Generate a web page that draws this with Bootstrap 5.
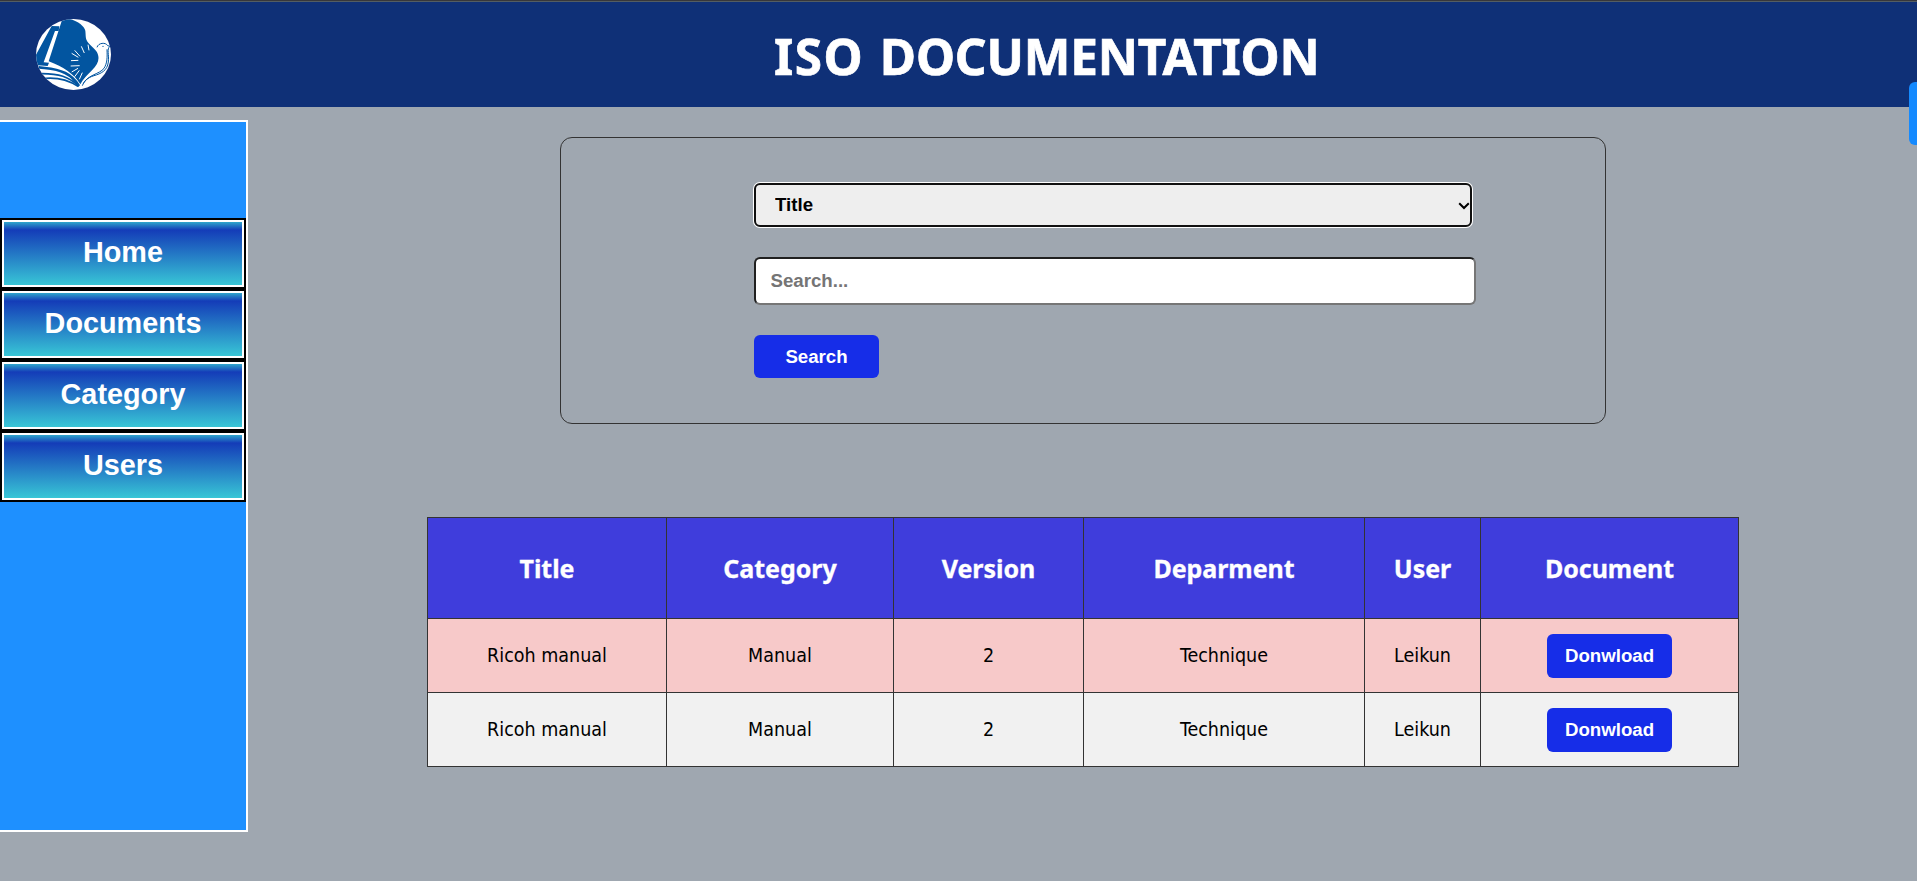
<!DOCTYPE html>
<html lang="en">
<head>
<meta charset="utf-8">
<meta name="viewport" content="width=device-width, initial-scale=1">
<title>ISO Documentation</title>
<link href="https://cdn.jsdelivr.net/npm/bootstrap@5.3.0/dist/css/bootstrap.min.css" rel="stylesheet">
<style>
  body { background: #9fa7b0; font-family: "Noto Sans", sans-serif; color: #000; min-height: 881px; overflow: hidden; }
  .top-bar { height: 107px; background: #0f3077; border-top: 1px solid #37373b; box-shadow: inset 0 1px #535d63; padding-left: 36px; }
  .brand-logo { width: 75px; height: 71px; }
  .page-title { font-size: 49.5px; font-weight: 700; line-height: 1; letter-spacing: -.2px; word-spacing: 3px; -webkit-text-stroke: .7px #fff; color: #fff; width: 541px; margin-left: 663px; padding-top: 5px; white-space: nowrap; }
  .title-lead { letter-spacing: 1.5px; }
  .side-menu { width: 248px; height: 712px; margin-top: 13px; padding-top: 96px; background: #1e90ff; border: 2px solid #fff; border-left: 0; }
  .side-menu .nav-link { height: 71px; padding: 0 0 2px; border: 2px solid #000; color: #fff; font: 700 28.8px "Liberation Sans", sans-serif; box-shadow: inset 0 0 0 2px #fff; background: linear-gradient(#2fa6cc 2px, #143cb8 10px, #38c6d6 65px); }
  .main-area { padding: 30px 179px 0 179px; }
  .search-box { width: 1046px; height: 287px; border: 1px solid #333; border-radius: 12px; padding: 45px 129px 0 193px; }
  .search-box .form-select, .search-box .form-control, .btn-doc { font: 700 18.667px "Liberation Sans", sans-serif; border-radius: 6px; }
  .search-box .form-select { width: 718px; height: 44px; padding: 0 18px 1px 19px; color: #000; border: 2px solid #101010; box-shadow: 0 0 0 1px #fff;
    background: #eee url("data:image/svg+xml,%3Csvg xmlns='http://www.w3.org/2000/svg' viewBox='0 0 12 8'%3E%3Cpath d='M1.2 1.2 6 6l4.8-4.8' fill='none' stroke='%23000' stroke-width='2'/%3E%3C/svg%3E") no-repeat right 0 top 17px / 12px 8px; }
  .search-box .form-control { width: 722px; height: 48px; margin-top: 30px; padding: 0 14.5px; border: 2px solid; border-color: #202020 #767676 #767676 #202020; }
  .search-box .form-control::placeholder { color: #757575; opacity: 1; }
  .btn-doc, .btn-doc:hover { width: 125px; height: 44px; padding: 0; border: 0; background: #162de8; color: #fff; }
  .btn-search { height: 43px; margin-top: 30px; }
  .doc-table { width: 1312px; margin: 93px 0 0; table-layout: fixed; border-collapse: collapse; text-align: center; color: #000; }
  .doc-table th, .doc-table td { border: 1px solid #333; padding: 0; vertical-align: middle; line-height: 28px; white-space: nowrap; }
  .doc-table th { height: 101px; background: #3f3ddc; color: #fff; font-size: 25px; letter-spacing: -.05px; -webkit-text-stroke: .3px #fff; }
  .doc-table td { height: 74px; background: #f1f1f1; font-family: "DejaVu Sans Condensed", "DejaVu Sans", sans-serif; font-stretch: condensed; font-size: 19.5px; }
  .doc-table .row-pink td { background: #f7c9c9; }
  .edge-tab { top: 82px; right: 0; width: 8px; height: 63px; background: #148aff; border-radius: 6px 0 0 6px; }
</style>
</head>
<body>
<header class="top-bar d-flex align-items-center">
  <svg class="brand-logo" viewBox="48 27 225 213" preserveAspectRatio="none" aria-label="Logo">
    <defs><clipPath id="disc"><ellipse cx="160.500" cy="133.500" rx="112.500" ry="106.500"/></clipPath></defs>
    <g clip-path="url(#disc)">
      <path fill="#fff" d="M48 27h225v213H48z"/>
      <!-- book covers -->
      <path fill="#0255a0" d="M95 48l23 1-2 14h-11L71 157l16 1-4 10-28-2-8 8-10-20z"/>
      <path fill="#0255a0" d="M128 24C165 25 192 46 196 62c2 16-1 25 10 38 9 11 22 18 27 31 7 18-1 34-17 50-13 13-26 25-35 42-19-31-50-52-95-69z"/>
      <!-- pages -->
      <path fill="none" stroke="#0255a0" stroke-width="8" d="M56 172l18 2c50 5 80 17 103 54"/>
      <path fill="none" stroke="#0255a0" stroke-width="5" d="M66 191c50 0 80 8 110 38"/>
      <path fill="none" stroke="#0255a0" stroke-width="5" d="M66 206c45-6 76 2 108 23"/>
      <!-- sun rays -->
      <path stroke="#fff" stroke-width="3" d="m164 121 16 18m4-30 9 20m11-25 3 17m-52 9 20 12m-22 10 22-1m-23 17 27-1m-24 19 19-11m-10 25 14-19m0 27 9-20"/>
      <!-- dove -->
      <path fill="none" stroke="#0255a0" stroke-width="3" d="M231 112c4-14 26-16 32-5l7 2c-11 8-2 25-5 47-3 26-22 35-43 41-21 7-29 16-35 30M261 118c1 24 1 41-9 57-14 18-46 18-62 45"/>
      <circle cx="249" cy="109" r="2" fill="#0255a0"/>
    </g>
  </svg>
  <h1 class="page-title mb-0"><span class="title-lead">ISO</span> DOCUMENTATION</h1>
</header>

<div class="d-flex">
  <nav class="side-menu nav flex-column flex-nowrap flex-shrink-0">
    <a class="nav-link d-flex align-items-center justify-content-center" href="#">Home</a>
    <a class="nav-link d-flex align-items-center justify-content-center" href="#">Documents</a>
    <a class="nav-link d-flex align-items-center justify-content-center" href="#">Category</a>
    <a class="nav-link d-flex align-items-center justify-content-center" href="#">Users</a>
  </nav>
  <main class="main-area flex-grow-1 d-flex flex-column align-items-center">
    <form class="search-box">
      <select class="form-select" aria-label="Search field"><option>Title</option></select>
      <input class="form-control" type="text" placeholder="Search...">
      <button class="btn btn-doc btn-search" type="button">Search</button>
    </form>
    <table class="doc-table">
      <colgroup><col style="width:239px"><col style="width:227px"><col style="width:190px"><col style="width:281px"><col style="width:116px"><col style="width:258px"></colgroup>
      <thead>
        <tr><th>Title</th><th>Category</th><th>Version</th><th>Deparment</th><th>User</th><th>Document</th></tr>
      </thead>
      <tbody>
        <tr class="row-pink"><td>Ricoh manual</td><td>Manual</td><td>2</td><td>Technique</td><td>Leikun</td><td><button class="btn btn-doc" type="button">Donwload</button></td></tr>
        <tr><td>Ricoh manual</td><td>Manual</td><td>2</td><td>Technique</td><td>Leikun</td><td><button class="btn btn-doc" type="button">Donwload</button></td></tr>
      </tbody>
    </table>
  </main>
</div>
<div class="edge-tab position-absolute"></div>
<script src="https://cdn.jsdelivr.net/npm/bootstrap@5.3.0/dist/js/bootstrap.bundle.min.js"></script>
</body>
</html>
